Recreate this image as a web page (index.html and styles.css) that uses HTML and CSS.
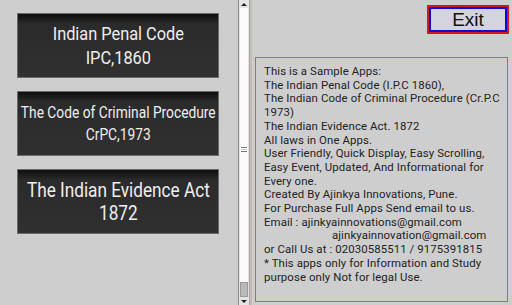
FILE: index.html
```html
<!DOCTYPE html>
<html lang="en">

<head>
    <meta charset="UTF-8">
    <meta name="viewport" content="width=device-width, initial-scale=1.0">
    <link rel="stylesheet" href="styles.css">
    <title>Indian Laws</title>
</head>

<body>
    <div class="container">
        <div class="law-list">
            <button class="law-btn ipc"><span class="label">Indian Penal Code<br>IPC,1860</span></button>
            <button class="law-btn crpc"><span class="label">The Code of Criminal Procedure<br>CrPC,1973</span></button>
            <button class="law-btn iea"><span class="label">The Indian Evidence Act<br>1872</span></button>
        </div>

        <div class="scrollbar">
            <div class="arrow up"></div>
            <div class="track">
                <div class="grip"></div>
                <div class="thumb"></div>
            </div>
            <div class="arrow down"></div>
        </div>

        <div class="info-side">
            <div class="exit-row">
                <button class="exit-btn">Exit</button>
            </div>
            <div class="info-box">
                This is a Sample Apps:<br>
                The Indian Penal Code (I.P.C 1860),<br>
                The Indian Code of Criminal Procedure (Cr.P.C 1973)<br>
                The Indian Evidence Act. 1872<br>
                All laws in One Apps.<br>
                User Friendly, Quick Display, Easy Scrolling, Easy Event, Updated, And Informational for Every one.<br>
                Created By Ajinkya Innovations, Pune.<br>
                For Purchase Full Apps Send email to us.<br>
                Email : ajinkyainnovations@gmail.com<br>
                <span class="mail-2">ajinkyainnovation@gmail.com</span><br>
                or Call Us at : 02030585511 / 9175391815<br>
                * This apps only for Information and Study purpose only Not for legal Use.
            </div>
        </div>
    </div>
</body>

</html>
```

FILE: styles.css
```css
* {
    margin: 0;
    padding: 0;
    box-sizing: border-box;
}

body {
    background: #cecece;
    font-family: 'Roboto', 'Liberation Sans', sans-serif;
}

.container {
    height: 305px;
    width: 512px;
    display: flex;
}

.law-list {
    flex: 0 0 238px;
    padding: 13px 0 0 17px;
    display: flex;
    flex-direction: column;
    gap: 13px;
}

.law-btn {
    width: 202px;
    height: 65px;
    padding: 0;
    color: #efefef;
    font-family: 'Roboto', sans-serif;
    border: 1px solid #6a6a6a;
    background: linear-gradient(#0e0e0e 0px, #2b2b2b 10px, #303030 100%);
    display: flex;
    align-items: center;
    justify-content: center;
    overflow: visible;
}

.label {
    display: inline-block;
    white-space: nowrap;
    text-align: center;
    transform: scaleX(0.86);
}

.ipc {
    font-size: 19px;
    line-height: 24px;
}

.crpc {
    font-size: 16px;
    line-height: 22px;
}

.iea {
    font-size: 20px;
    line-height: 23px;
}

.scrollbar {
    flex: 0 0 12px;
    display: flex;
    flex-direction: column;
    border-left: 1px solid #8c8c8c;
    border-right: 1px solid #a8a8a8;
    background: #e4e4e4;
}

.arrow {
    height: 8px;
    display: flex;
    align-items: center;
    justify-content: center;
}

.arrow::after {
    content: '';
    border-left: 3px solid transparent;
    border-right: 3px solid transparent;
}

.arrow.up::after {
    border-bottom: 3px solid #222;
}

.arrow.down::after {
    border-top: 3px solid #222;
}

.track {
    flex: 1;
    margin: 0 1px;
    background: #fbfbfb;
    display: flex;
    flex-direction: column;
    justify-content: flex-end;
    align-items: center;
    position: relative;
}

.grip {
    position: absolute;
    top: 139px;
    width: 6px;
    height: 5px;
    border-top: 1px solid #777;
    border-bottom: 1px solid #777;
    background: linear-gradient(#ccc, #ccc) center / 100% 1px no-repeat;
}

.thumb {
    width: 100%;
    height: 15px;
    background: #b9b9b9;
    border: 1px solid #999;
}

.info-side {
    flex: 1;
    min-width: 0;
    padding: 6px 4px 3px 3px;
    display: flex;
    flex-direction: column;
    border-left: 2px solid #bcc0b8;
}

.exit-row {
    display: flex;
    justify-content: flex-end;
    height: 51px;
}

.exit-btn {
    width: 78px;
    height: 25px;
    font-family: 'Liberation Sans', sans-serif;
    font-size: 19px;
    color: #111;
    background: #d4d4dc;
    border: 2px solid #0b0bd8;
    outline: 2px solid #d8141e;
    margin: 1px 1px 0 0;
    line-height: 19px;
}

.info-box {
    flex: 1;
    border: 1px solid #e0545a;
    padding: 7px 4px 0 8px;
    font-size: 11.4px;
    letter-spacing: 0.1px;
    line-height: 13.7px;
    color: #222;
}

.mail-2 {
    padding-left: 68px;
}
```
